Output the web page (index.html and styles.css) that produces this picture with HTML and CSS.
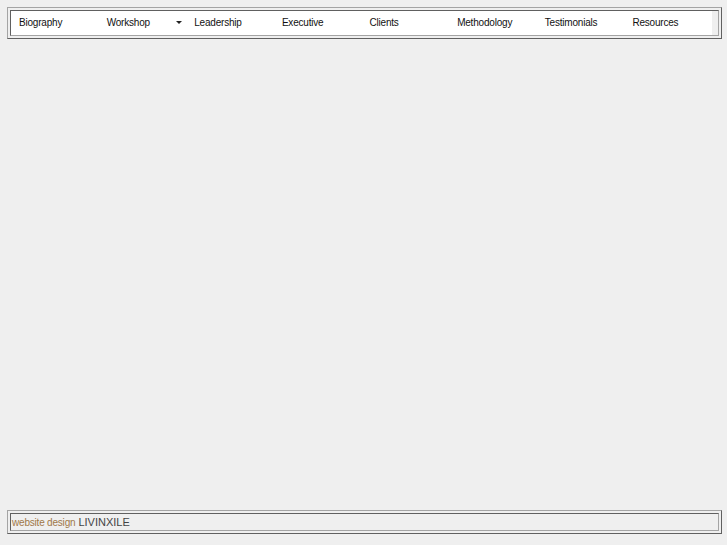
FILE: index.html
```html
<!DOCTYPE html>
<html lang="en">
<head>
    <meta charset="UTF-8">
    <title>Menu</title>
    <link rel="stylesheet" href="styles.css">
</head>
<body>
    <div class="frame">
        <nav class="menu">
            <a class="item" href="#">Biography</a>
            <a class="item" href="#">Workshop <span class="arrow"></span></a>
            <a class="item" href="#">Leadership</a>
            <a class="item" href="#">Executive</a>
            <a class="item" href="#">Clients</a>
            <a class="item" href="#">Methodology</a>
            <a class="item" href="#">Testimonials</a>
            <a class="item" href="#">Resources</a>
            <span class="filler"></span>
        </nav>
    </div>

    <div class="frame">
        <div class="credit"><a href="#">website design</a> <span class="brand">LIVINXILE</span></div>
    </div>
</body>
</html>
```

FILE: styles.css
```css
html { height: 100%; }
body {
    margin: 7px 5px 11px 7px;
    height: calc(100% - 18px);
    display: flex;
    flex-direction: column;
    justify-content: space-between;
    background: #efefef;
    font-family: "Liberation Sans", Arial, sans-serif;
}

.frame {
    padding: 2px;
    border: 1px solid;
    border-color: #a4a4a4 #606060 #606060 #a4a4a4;
}

.menu {
    display: grid;
    grid-template-columns: repeat(8, 1fr) 6px;
    height: 24px;
    background: #fff;
    border: 1px solid;
    border-color: #606060 #a4a4a4 #a4a4a4 #606060;
}

.item {
    display: flex;
    align-items: center;
    padding: 0 4px 2px 8px;
    font-size: 10px;
    color: #111;
    text-decoration: none;
    letter-spacing: -0.2px;
}

.arrow {
    margin-left: auto;
    margin-top: 1px;
    width: 0;
    height: 0;
    border-left: 3px solid transparent;
    border-right: 3px solid transparent;
    border-top: 3px solid #222;
}

.filler { background: #efefef; }

.credit {
    height: 16px;
    line-height: 16px;
    padding: 0 1px;
    border: 1px solid;
    border-color: #606060 #a4a4a4 #a4a4a4 #606060;
    font-size: 11px;
    white-space: nowrap;
}

.credit a {
    color: #a07848;
    text-decoration: none;
    font-size: 10px;
    letter-spacing: -0.2px;
}

.brand { color: #444; }
```
